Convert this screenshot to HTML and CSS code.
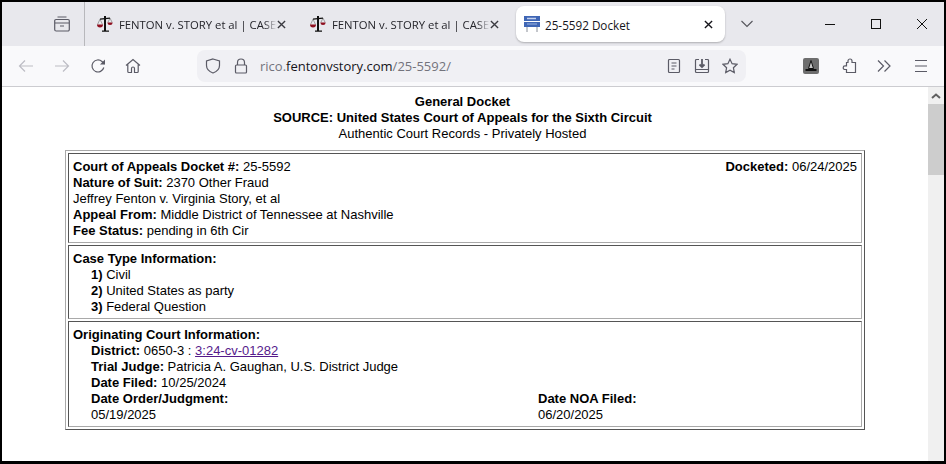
FILE: index.html
```html
<!DOCTYPE html>
<html lang="en">
<head>
    <meta charset="UTF-8">
    <title>25-5592 Docket</title>
    <link rel="stylesheet" href="styles.css">
</head>
<body>
<div class="window">

    <div class="tabBar">
        <div class="tabSide">
            <svg class="icon" viewBox="0 0 16 16"><path d="M3.500 1h9M2 3.500h12a1.300 1.300 0 0 1 1.300 1.300v8.700a1.500 1.500 0 0 1-1.500 1.500H2.200a1.500 1.500 0 0 1-1.500-1.500V4.800A1.300 1.300 0 0 1 2 3.500zM.7 7h14.600M6 10h4"/></svg>
        </div>
        <div class="tab tabFirst">
            <svg class="favicon" viewBox="0 0 16 16"><use href="#scales"/></svg>
            <span class="tabTitle">FENTON v. STORY et al | CASE</span>
            <svg class="tabClose" viewBox="0 0 10 10"><path d="M1 1l8 8M9 1l-8 8"/></svg>
        </div>
        <div class="tab tabSecond">
            <svg class="favicon" viewBox="0 0 16 16"><use href="#scales"/></svg>
            <span class="tabTitle">FENTON v. STORY et al | CASE</span>
            <svg class="tabClose" viewBox="0 0 10 10"><path d="M1 1l8 8M9 1l-8 8"/></svg>
        </div>
        <div class="tab tabActive">
            <svg class="favicon" viewBox="0 0 16 16">
                <rect x="0" y="0" width="16" height="5" fill="#3f66b5"/>
                <rect x="0" y="6" width="16" height="5" fill="#3f66b5"/>
                <path d="M3 2.500h9" stroke="#c4d2ee" stroke-width="1.500"/>
                <path d="M3 8h10" stroke="#9db4e0" stroke-width="1"/>
                <path d="M3 11v5M13 11v5" stroke="#8a8f99" stroke-width="1"/>
            </svg>
            <span class="tabTitleActive">25-5592 Docket</span>
            <svg class="tabClose tabCloseDark" viewBox="0 0 10 10"><path d="M1 1l8 8M9 1l-8 8"/></svg>
        </div>
        <svg class="tabList" viewBox="0 0 12 8"><path d="M0.500 1L6 6.500 11.500 1"/></svg>
        <div class="winControls">
            <svg class="winBtn" viewBox="0 0 12 12"><path d="M1 6.500h10"/></svg>
            <svg class="winBtn" viewBox="0 0 12 12"><rect x="1.500" y="1.500" width="9" height="9"/></svg>
            <svg class="winBtn" viewBox="0 0 12 12"><path d="M1 1l10 10M11 1L1 11"/></svg>
        </div>
    </div>

    <div class="toolBar">
        <div class="navBtns">
            <svg class="icon iconOff" viewBox="0 0 16 16"><path d="M15 8H1.500M7 2.500L1.500 8 7 13.500"/></svg>
            <svg class="icon iconOff" viewBox="0 0 16 16"><path d="M1 8h13.500M9 2.500L14.500 8 9 13.500"/></svg>
            <svg class="icon" viewBox="0 0 16 16"><path d="M13.800 9.500A6 6 0 1 1 12 3.500L14.500 6"/><path class="solid" d="M15 1.500V6.500H10z"/></svg>
            <svg class="icon navHome" viewBox="0 0 16 16"><path d="M1 7.500L8 1.500l7 6M2.800 6.500v7a1 1 0 0 0 1 1H6.500v-4a1.500 1.500 0 0 1 3 0v4h2.700a1 1 0 0 0 1-1v-7"/></svg>
        </div>
        <div class="urlBar">
            <svg class="icon urlShield" viewBox="0 0 16 16"><path d="M8 1l6.500 2v4.500c0 3.500-2.500 6-6.500 7.500-4-1.500-6.500-4-6.500-7.500V3z"/></svg>
            <svg class="icon urlLock" viewBox="0 0 16 16"><path d="M4.500 7V4.500a3.500 3.500 0 0 1 7 0V7M3.500 7h9a1 1 0 0 1 1 1v6a1 1 0 0 1-1 1h-9a1 1 0 0 1-1-1V8a1 1 0 0 1 1-1z"/></svg>
            <span class="urlText"><span class="urlDim">rico.</span>fentonvstory.com<span class="urlDim">/25-5592/</span></span>
            <div class="urlIcons">
                <svg class="icon" viewBox="0 0 16 16"><path d="M3.500 1.500h9a1 1 0 0 1 1 1v11a1 1 0 0 1-1 1h-9a1 1 0 0 1-1-1v-11a1 1 0 0 1 1-1zM5.500 5h5M5.500 8h5M5.500 11h3"/></svg>
                <svg class="icon" viewBox="0 0 16 16"><path d="M5 1.500H2.500a1 1 0 0 0-1 1v11a1 1 0 0 0 1 1h11a1 1 0 0 0 1-1v-11a1 1 0 0 0-1-1H11M1.500 11.500h13"/><path d="M8 1v7.500M5.500 6.500L8 9l2.500-2.500" stroke-width="1.800"/></svg>
                <svg class="icon" viewBox="0 0 16 16"><path d="M8 1.200l2.100 4.500 4.900.6-3.600 3.400.9 4.900L8 12.200l-4.300 2.400.9-4.900L1 6.300l4.900-.6z"/></svg>
            </div>
        </div>
        <div class="extBtns">
            <svg class="extIcon" viewBox="0 0 16 16">
                <rect width="16" height="16" rx="2" fill="#6e6e6e"/>
                <path d="M8 2.500L5.500 10.500h5z" fill="#c8c8c8" stroke="#111" stroke-width="1"/>
                <path d="M2.500 11h11v2h-11z" fill="#111"/>
            </svg>
            <svg class="icon extPuzzle" viewBox="0 0 16 16"><path d="M7 4.500V3a2 2 0 0 1 4 0v1.500h3.500v10H5.500v-3H4a1.800 1.800 0 0 1 0-3.600h1.500V4.500z"/></svg>
            <svg class="icon extMore" viewBox="0 0 16 16"><path d="M2 2.500L7.500 8 2 13.500M8.500 2.500L14 8l-5.500 5.500"/></svg>
            <svg class="icon extMenu" viewBox="0 0 16 16"><path d="M2 2.500h12M2 8h12M2 13.500h12"/></svg>
        </div>
    </div>

    <div class="viewport">
        <div class="page">
            <div class="pageHead">
                <div><b>General Docket</b></div>
                <div><b>SOURCE: United States Court of Appeals for the Sixth Circuit</b></div>
                <div>Authentic Court Records - Privately Hosted</div>
            </div>
            <table class="docket">
                <tr>
                    <td>
                        <div class="splitRow">
                            <div><b>Court of Appeals Docket #:</b> 25-5592</div>
                            <div><b>Docketed:</b> 06/24/2025</div>
                        </div>
                        <div><b>Nature of Suit:</b> 2370 Other Fraud</div>
                        <div>Jeffrey Fenton v. Virginia Story, et al</div>
                        <div><b>Appeal From:</b> Middle District of Tennessee at Nashville</div>
                        <div><b>Fee Status:</b> pending in 6th Cir</div>
                    </td>
                </tr>
                <tr>
                    <td>
                        <div><b>Case Type Information:</b></div>
                        <div class="indent"><b>1)</b> Civil</div>
                        <div class="indent"><b>2)</b> United States as party</div>
                        <div class="indent"><b>3)</b> Federal Question</div>
                    </td>
                </tr>
                <tr>
                    <td>
                        <div><b>Originating Court Information:</b></div>
                        <div class="indent"><b>District:</b> 0650-3 : <a href="#">3:24-cv-01282</a></div>
                        <div class="indent"><b>Trial Judge:</b> Patricia A. Gaughan, U.S. District Judge</div>
                        <div class="indent"><b>Date Filed:</b> 10/25/2024</div>
                        <div class="indent dateGrid">
                            <div><b>Date Order/Judgment:</b></div>
                            <div><b>Date NOA Filed:</b></div>
                            <div>05/19/2025</div>
                            <div>06/20/2025</div>
                        </div>
                    </td>
                </tr>
            </table>
        </div>
        <div class="scrollBar">
            <div class="scrollUp">
                <svg viewBox="0 0 10 6"><path d="M1 5l4-3.500L9 5"/></svg>
            </div>
            <div class="scrollThumb"></div>
        </div>
    </div>
</div>

<svg class="defs" width="0" height="0">
    <symbol id="scales" viewBox="0 0 16 16">
        <path d="M3 3.200L0.500 8.500M3 3.200L5.500 8.500M13 2.200L10.800 6.500M13 2.200L15.200 6.500" stroke="#8a8a8a" stroke-width=".8" fill="none"/>
        <path d="M8 0v15" stroke="#111" stroke-width="2" fill="none"/>
        <path d="M3 3.200L13 2.200M5 15.200h7" stroke="#111" stroke-width="1.200" fill="none"/>
        <path d="M0 8.500h6a3 3 0 0 1-6 0z" fill="#8f1020"/>
        <path d="M10.500 6.500h5a2.500 2.500 0 0 1-5 0z" fill="#8f1020"/>
    </symbol>
</svg>
</body>
</html>
```

FILE: styles.css
```css
* {
    box-sizing: border-box;
}

html, body {
    margin: 0;
    height: 100%;
    overflow: hidden;
}

body {
    background: #000;
    font: 13px/16px "Liberation Sans", Arial, sans-serif;
    color: #000;
}

.defs {
    position: absolute;
}

.window {
    height: 459px;
    margin: 2px 2px 3px 2px;
    display: flex;
    flex-direction: column;
    background: #fff;
}

/* tab strip */
.tabBar {
    height: 44px;
    flex: none;
    display: flex;
    align-items: center;
    background: #e8e8ed;
    font: 11.300px/16px "Open Sans", "Noto Sans", sans-serif;
}

.tabSide {
    width: 83px;
    height: 44px;
    padding-left: 52px;
    display: flex;
    align-items: center;
    border-right: 1px solid #b8b8bc;
}

.tab {
    display: flex;
    align-items: center;
    height: 36px;
}

.tabFirst {
    width: 213px;
    padding-left: 12px;
}

.tabSecond {
    width: 218px;
    padding-left: 12px;
    padding-right: 15px;
}

.tabActive {
    width: 209px;
    padding-left: 8px;
    background: #fff;
    border-radius: 8px;
    box-shadow: 0 1px 2px rgba(0, 0, 0, .25);
}

.favicon {
    width: 16px;
    height: 16px;
    flex: none;
}

.tabTitle {
    width: 158px;
    margin-left: 6px;
    padding-top: 1px;
    white-space: nowrap;
    color: #25252b;
    -webkit-mask-image: linear-gradient(to right, #000 92%, transparent 100%);
    mask-image: linear-gradient(to right, #000 92%, transparent 100%);
}

.tabTitleActive {
    width: 158px;
    margin-left: 5px;
    padding-top: 1px;
    white-space: nowrap;
    color: #15141a;
    font-size: 11.700px;
}

.tabClose {
    width: 9px;
    height: 9px;
    flex: none;
    fill: none;
    stroke: #3a3a40;
    stroke-width: 1.500;
}

.tabCloseDark {
    margin-left: 1px;
    stroke: #15141a;
}

.tabList {
    width: 12px;
    height: 8px;
    margin-left: 16px;
    flex: none;
    fill: none;
    stroke: #55555b;
    stroke-width: 1.100;
}

.winControls {
    margin-left: auto;
    display: flex;
    gap: 34px;
    padding-right: 16px;
}

.winBtn {
    width: 12px;
    height: 12px;
    fill: none;
    stroke: #111;
    stroke-width: 1;
}

/* toolbar */
.toolBar {
    height: 41px;
    flex: none;
    display: flex;
    align-items: center;
    background: #f9f9fb;
    border-bottom: 1px solid #ccccd0;
}

.icon {
    width: 16px;
    height: 16px;
    flex: none;
    fill: none;
    stroke: #5b5b66;
    stroke-width: 1.200;
}

.icon .solid {
    fill: #5b5b66;
    stroke: none;
}

.iconOff {
    stroke: #bdbdc4;
}

.navBtns {
    width: 195px;
    padding-left: 16px;
    display: flex;
    gap: 20px;
}

.navHome {
    margin-left: -1px;
}

.urlBar {
    width: 549px;
    height: 32px;
    display: flex;
    align-items: center;
    padding: 0 8px;
    background: #f0f0f4;
    border-radius: 8px;
    font: 13px/16px "Open Sans", "Noto Sans", sans-serif;
    color: #15141a;
}

.urlLock {
    margin-left: 12px;
}

.urlText {
    margin-left: 11px;
}

.urlDim {
    color: #73737c;
}

.urlIcons {
    margin-left: auto;
    display: flex;
    gap: 12px;
}

.extBtns {
    display: flex;
    align-items: center;
    margin-left: 57px;
}

.extIcon {
    width: 16px;
    height: 16px;
}

.extPuzzle {
    margin-left: 22px;
}

.extMore {
    margin-left: 19px;
}

.extMenu {
    margin-left: 21px;
}

/* page */
.viewport {
    flex: 1;
    min-height: 0;
    display: flex;
}

.page {
    flex: 1;
    min-width: 0;
    padding-top: 7px;
    overflow: hidden;
}

.pageHead {
    text-align: center;
    padding-right: 5px;
    margin-bottom: 8px;
}

.docket {
    width: 800px;
    margin: 0 auto;
    border-collapse: separate;
    border-spacing: 2px;
    border: 1px solid;
    border-color: #a9a9a9 #555 #555 #a9a9a9;
}

.docket td {
    padding: 5px 4px 3px;
    border: 1px solid;
    border-color: #555 #a9a9a9 #a9a9a9 #555;
}

.splitRow {
    display: flex;
    justify-content: space-between;
}

.indent {
    padding-left: 18px;
}

.dateGrid {
    display: grid;
    grid-template-columns: 447px 1fr;
}

a {
    color: #551a8b;
}

/* scrollbar */
.scrollBar {
    width: 16px;
    flex: none;
    background: #f0f0f0;
}

.scrollUp {
    height: 17px;
    display: flex;
    align-items: center;
    justify-content: center;
}

.scrollUp svg {
    width: 10px;
    height: 6px;
    fill: none;
    stroke: #606060;
    stroke-width: 2;
}

.scrollThumb {
    height: 71px;
    background: #cdcdcd;
}
```
